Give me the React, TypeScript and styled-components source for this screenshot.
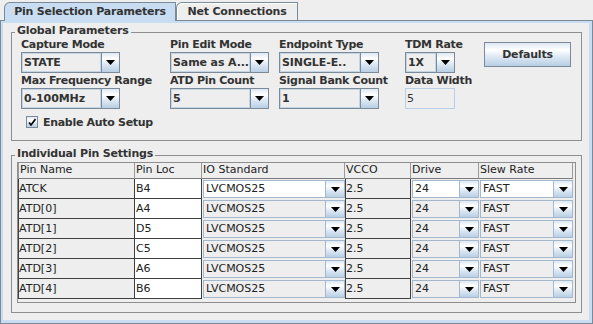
import React from "react";
import styled, { createGlobalStyle } from "styled-components";

const GlobalStyle = createGlobalStyle`
  html, body {
    margin: 0;
    padding: 0;
    background: #eeeeee;
  }
  body {
    font-family: "DejaVu Sans", "Liberation Sans", sans-serif;
    font-size: 11px;
    color: #333333;
  }
  * {
    box-sizing: border-box;
  }
`;

// ocean look and feel gradient used on buttons and arrows
const OCEAN = "linear-gradient(to bottom, #dde8f3 0%, #ffffff 30%, #dde8f3 60%, #b8cfe5 100%)";

const Window = styled.div`
  width: 593px;
  height: 324px;
  display: flex;
  flex-direction: column;
`;

const TabStrip = styled.div`
  display: flex;
  align-items: flex-end;
  height: 20px;
  padding-left: 4px;
`;

const Tab = styled.div<{ $selected?: boolean; $w: number }>`
  position: relative;
  z-index: 1;
  width: ${(p) => p.$w}px;
  height: ${(p) => (p.$selected ? 19 : 18)}px;
  margin-bottom: ${(p) => (p.$selected ? -1 : 0)}px;
  border: 1px solid #7a8a99;
  border-bottom: none;
  border-top-left-radius: 6px;
  background: ${(p) => (p.$selected ? "#c8ddf2" : "#eeeeee")};
  box-shadow: ${(p) => (p.$selected ? "none" : "inset 1px 1px 0 #ffffff")};
  display: flex;
  justify-content: center;
  font-weight: bold;
  letter-spacing: -0.2px;
  line-height: 17px;
  white-space: nowrap;
`;

const TabPanel = styled.div`
  flex: 1;
  display: flex;
  flex-direction: column;
  border: 1px solid #7a8a99;
  box-shadow: inset 2px 2px 0 #c8ddf2, inset -3px -3px 0 #c8ddf2;
  padding: 11px 10px 10px 10px;
`;

const Box = styled.div<{ $grow?: boolean }>`
  position: relative;
  border: 1px solid #8e8e8e;
  flex: ${(p) => (p.$grow ? 1 : "none")};
  display: flex;
  flex-direction: column;
  & + & {
    margin-top: 14px;
  }
`;

const BoxTitle = styled.span`
  position: absolute;
  top: -9px;
  left: 3px;
  padding: 0 2px;
  background: #eeeeee;
  font-weight: bold;
  letter-spacing: -0.2px;
  line-height: 14px;
  white-space: nowrap;
`;

const GlobalBody = styled.div`
  padding: 4px 10px 9px 9px;
`;

const ParamGrid = styled.div`
  display: grid;
  grid-template-columns: 149px 109px 126px 79px 87px;
  grid-template-rows: 15px 21px 15px 21px;
`;

const Label = styled.div<{ $row: number; $col: number }>`
  grid-row: ${(p) => p.$row};
  grid-column: ${(p) => p.$col};
  font-weight: bold;
  letter-spacing: -0.3px;
  line-height: 15px;
  white-space: nowrap;
`;

const ComboFrame = styled.div<{ $w: number; $row: number; $col: number }>`
  grid-row: ${(p) => p.$row};
  grid-column: ${(p) => p.$col};
  display: flex;
  width: ${(p) => p.$w}px;
  height: 100%;
  border: 1px solid #7a8a99;
  background: #eeeeee;
`;

const ComboValue = styled.div`
  flex: 1;
  min-width: 0;
  border: 1px solid #c4d5e6;
  padding-left: 1px;
  font-weight: bold;
  letter-spacing: -0.1px;
  line-height: 17px;
  white-space: nowrap;
  overflow: hidden;
`;

const ArrowButton = styled.div<{ $w?: number; $line?: string }>`
  width: ${(p) => p.$w ?? 18}px;
  flex: none;
  border-left: 1px solid ${(p) => p.$line ?? "#7a8a99"};
  background: ${OCEAN};
  display: flex;
  align-items: center;
  justify-content: center;
`;

const TextField = styled.div<{ $w: number }>`
  grid-row: 4;
  grid-column: 4;
  width: ${(p) => p.$w}px;
  height: 100%;
  border: 1px solid #b8cfe5;
  background: #eeeeee;
  padding-left: 1px;
  line-height: 19px;
`;

const Button = styled.div`
  grid-column: 5;
  grid-row: 1 / span 2;
  align-self: start;
  margin-top: 5px;
  height: 25px;
  border: 1px solid #7a8a99;
  background: ${OCEAN};
  display: flex;
  align-items: center;
  justify-content: center;
  font-weight: bold;
  letter-spacing: -0.2px;
`;

const CheckRow = styled.div`
  display: flex;
  align-items: center;
  gap: 5px;
  height: 18px;
  margin: 4px 0 0 5px;
  font-weight: bold;
  letter-spacing: -0.3px;
`;

const CheckBox = styled.div`
  width: 12px;
  height: 12px;
  border: 1px solid #7a8a99;
  background: ${OCEAN};
  display: flex;
  align-items: center;
  justify-content: center;
`;

const PinBody = styled.div`
  flex: 1;
  display: flex;
  flex-direction: column;
  padding: 6px 5px 9px 5px;
`;

const ScrollPane = styled.div`
  flex: 1;
  border: 1px solid #8e8e8e;
  background: #eeeeee;
`;

const TableGrid = styled.div`
  display: grid;
  grid-template-columns: 117px 67px 143px 66px 68px 94px;
  grid-template-rows: 16px;
  grid-auto-rows: 20px;
  color: #222222;
`;

const HeadCell = styled.div<{ $first?: boolean }>`
  border-right: 1px solid #9a9a9a;
  border-bottom: 1px solid #7a7a7a;
  border-left: ${(p) => (p.$first ? "1px solid #9a9a9a" : "none")};
  padding-left: 1px;
  line-height: 14px;
  white-space: nowrap;
  overflow: hidden;
`;

const TextCell = styled.div<{ $white?: boolean; $leftLine?: boolean; $pad?: number }>`
  background: ${(p) => (p.$white ? "#ffffff" : "#eeeeee")};
  border-right: 1px solid #404040;
  border-bottom: 1px solid #404040;
  border-left: ${(p) => (p.$leftLine ? "1px solid #404040" : "none")};
  padding-left: ${(p) => p.$pad ?? 0}px;
  line-height: 19px;
  white-space: nowrap;
`;

const ComboCell = styled.div`
  padding: 1px 0 1px 1px;
  background: #eeeeee;
`;

const CellFrame = styled.div<{ $white?: boolean }>`
  display: flex;
  height: 100%;
  border: 1px solid #a3b8cc;
  background: ${(p) => (p.$white ? "#ffffff" : "#eeeeee")};
`;

const CellValue = styled.div`
  flex: 1;
  padding-left: 2px;
  font-weight: normal;
  line-height: 16px;
  white-space: nowrap;
  overflow: hidden;
`;

const Arrow = () => (
  <svg width="9" height="5" viewBox="0 0 9 5">
    <path d="M0 0H9L4.5 5Z" fill="#000000" />
  </svg>
);

const Combo = ({ value, width, row, col }: { value: string; width: number; row: number; col: number }) => (
  <ComboFrame $w={width} $row={row} $col={col}>
    <ComboValue>{value}</ComboValue>
    <ArrowButton>
      <Arrow />
    </ArrowButton>
  </ComboFrame>
);

const CellCombo = ({ value, white }: { value: string; white?: boolean }) => (
  <CellFrame $white={white}>
    <CellValue>{value}</CellValue>
    <ArrowButton $w={19} $line="#a3b8cc">
      <Arrow />
    </ArrowButton>
  </CellFrame>
);

const params = [
  { label: "Capture Mode", value: "STATE", width: 99 },
  { label: "Pin Edit Mode", value: "Same as A...", width: 99 },
  { label: "Endpoint Type", value: "SINGLE-E..", width: 100 },
  { label: "TDM Rate", value: "1X", width: 50 },
  { label: "Max Frequency Range", value: "0-100MHz", width: 99 },
  { label: "ATD Pin Count", value: "5", width: 99 },
  { label: "Signal Bank Count", value: "1", width: 100 },
];

const headers = ["Pin Name", "Pin Loc", "IO Standard", "VCCO", "Drive", "Slew Rate"];

const pins = [
  { name: "ATCK", loc: "B4" },
  { name: "ATD[0]", loc: "A4" },
  { name: "ATD[1]", loc: "D5" },
  { name: "ATD[2]", loc: "C5" },
  { name: "ATD[3]", loc: "A6" },
  { name: "ATD[4]", loc: "B6" },
];

const App = () => {
  return (
    <Window>
      <GlobalStyle />
      <TabStrip>
        <Tab $selected $w={172}>Pin Selection Parameters</Tab>
        <Tab $w={122}>Net Connections</Tab>
      </TabStrip>
      <TabPanel>
        <Box>
          <BoxTitle>Global Parameters</BoxTitle>
          <GlobalBody>
            <ParamGrid>
              {params.map((p, i) => {
                const row = i < 4 ? 1 : 3;
                const col = (i % 4) + 1;
                return (
                  <React.Fragment key={p.label}>
                    <Label $row={row} $col={col}>{p.label}</Label>
                    <Combo value={p.value} width={p.width} row={row + 1} col={col} />
                  </React.Fragment>
                );
              })}
              <Label $row={3} $col={4}>Data Width</Label>
              <TextField $w={50}>5</TextField>
              <Button>Defaults</Button>
            </ParamGrid>
            <CheckRow>
              <CheckBox>
                <svg width="8" height="8" viewBox="0 0 8 8">
                  <path d="M1 4.5L3 7L7.5 1" fill="none" stroke="#000000" strokeWidth="1.6" />
                </svg>
              </CheckBox>
              Enable Auto Setup
            </CheckRow>
          </GlobalBody>
        </Box>
        <Box $grow>
          <BoxTitle>Individual Pin Settings</BoxTitle>
          <PinBody>
            <ScrollPane>
              <TableGrid>
                {headers.map((h, i) => (
                  <HeadCell key={h} $first={i === 0}>
                    {h}
                  </HeadCell>
                ))}
                {pins.map((p, i) => (
                  <React.Fragment key={p.name}>
                    <TextCell $leftLine>{p.name}</TextCell>
                    <TextCell $white $pad={1}>{p.loc}</TextCell>
                    <ComboCell>
                      <CellCombo value="LVCMOS25" white={i === 0} />
                    </ComboCell>
                    <TextCell $leftLine>2.5</TextCell>
                    <ComboCell>
                      <CellCombo value="24" white={i === 0} />
                    </ComboCell>
                    <ComboCell>
                      <CellCombo value="FAST" white={i === 0} />
                    </ComboCell>
                  </React.Fragment>
                ))}
              </TableGrid>
            </ScrollPane>
          </PinBody>
        </Box>
      </TabPanel>
    </Window>
  );
};

export default App;
